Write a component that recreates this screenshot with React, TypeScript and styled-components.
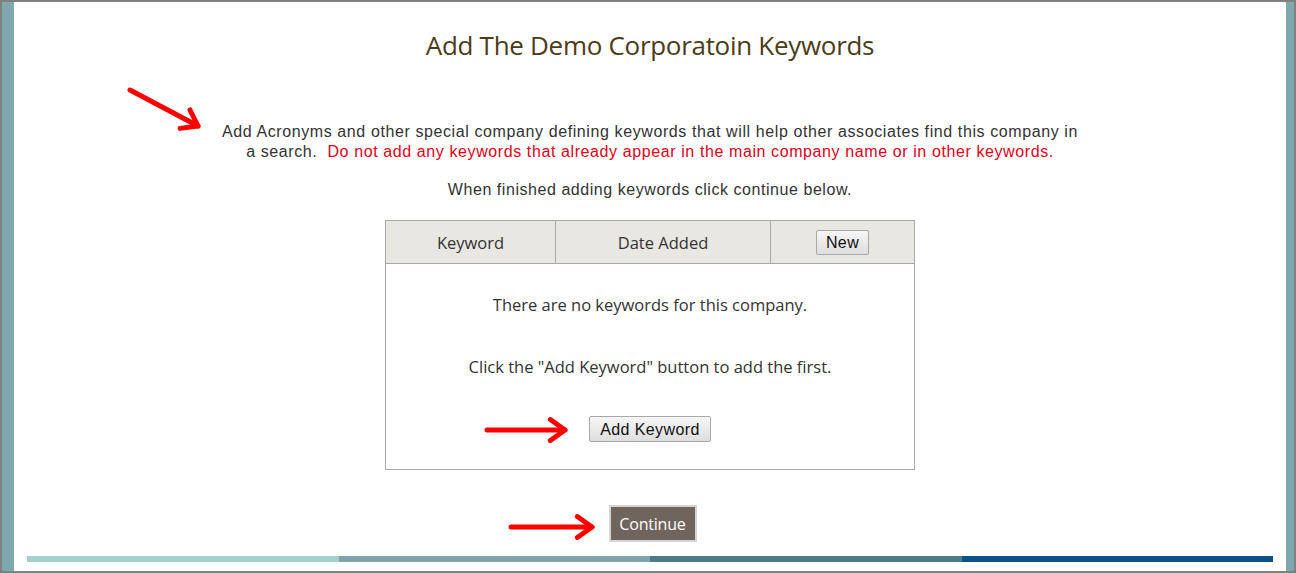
import React from "react";
import styled, { createGlobalStyle } from "styled-components";

const GlobalStyle = createGlobalStyle`
  html, body {
    margin: 0;
    padding: 0;
    background: #ffffff;
  }
  * {
    box-sizing: border-box;
  }
`;

const Frame = styled.div`
  position: relative;
  width: 1296px;
  height: 573px;
  border: 2px solid #808080;
  display: flex;
  background: #ffffff;
`;

const Band = styled.div<{ $w: number }>`
  width: ${(p) => p.$w}px;
  flex-shrink: 0;
  background: #7fa8ad;
`;

const Main = styled.div`
  flex: 1;
  display: flex;
  flex-direction: column;
  align-items: center;
`;

const Title = styled.h1`
  margin: 26px 0 0;
  font-family: "Open Sans", "Noto Sans", sans-serif;
  font-weight: 500;
  font-size: 26px;
  line-height: 34px;
  color: #4c3b18;
  letter-spacing: -0.3px;
`;

const Intro = styled.p`
  margin: 60px 0 0;
  width: 862px;
  text-align: center;
  font-family: "Liberation Sans", Arial, sans-serif;
  font-size: 16px;
  letter-spacing: 0.6px;
  line-height: 20px;
  color: #333333;
`;

const Warning = styled.span`
  color: #e2001a;
`;

const Hint = styled(Intro)`
  margin-top: 18px;
  letter-spacing: 0.55px;
`;

const Table = styled.div`
  margin-top: 20px;
  width: 530px;
  border: 1px solid #a9a9a9;
  font-family: "Open Sans", "Noto Sans", sans-serif;
  font-size: 16.5px;
  color: #333333;
`;

const HeaderRow = styled.div`
  display: grid;
  grid-template-columns: 170px 215px 1fr;
  height: 43px;
  background: #e9e7e2;
  border-bottom: 1px solid #a9a9a9;
`;

const HeaderCell = styled.div<{ $last?: boolean }>`
  display: flex;
  align-items: center;
  justify-content: center;
  border-right: ${(p) => (p.$last ? "none" : "1px solid #a9a9a9")};
`;

const Body = styled.div`
  height: 205px;
  display: flex;
  flex-direction: column;
  align-items: center;
  padding-top: 30px;
`;

const BodyLine = styled.div<{ $gap: number }>`
  margin-top: ${(p) => p.$gap}px;
  line-height: 22px;
`;

const GrayButton = styled.button<{ $size: number; $pad: number }>`
  font-family: "Liberation Sans", Arial, sans-serif;
  font-size: ${(p) => p.$size}px;
  letter-spacing: 0.4px;
  color: #111111;
  background: linear-gradient(#f6f6f6, #dedede);
  border: 1px solid #a8a8a8;
  border-radius: 2px;
  padding: 2px ${(p) => p.$pad}px;
  line-height: 19px;
  cursor: pointer;
`;

const AddButton = styled(GrayButton)`
  margin-top: 38px;
  height: 26px;
`;

const ContinueButton = styled.button`
  margin: 35px 0 0 5px;
  width: 88px;
  height: 37px;
  background: #6f655d;
  color: #ffffff;
  border: 2px solid #d4d4d4;
  font-family: "Open Sans", "Noto Sans", sans-serif;
  font-size: 16px;
  letter-spacing: -0.2px;
  cursor: pointer;
`;

const ColorBar = styled.div`
  margin-top: auto;
  margin-bottom: 9px;
  width: 1246px;
  height: 6px;
  display: grid;
  grid-template-columns: repeat(4, 1fr);
`;

const BarPart = styled.div<{ $c: string }>`
  background: ${(p) => p.$c};
`;

const Arrow = styled.svg`
  position: absolute;
  overflow: visible;
`;

const RedArrow: React.FC<{ x1: number; y1: number; x2: number; y2: number }> = ({
  x1,
  y1,
  x2,
  y2,
}) => {
  const a = Math.atan2(y2 - y1, x2 - x1);
  const len = 18;
  const spread = 0.62;
  const h1x = x2 - len * Math.cos(a - spread);
  const h1y = y2 - len * Math.sin(a - spread);
  const h2x = x2 - len * Math.cos(a + spread);
  const h2y = y2 - len * Math.sin(a + spread);
  return (
    <Arrow width="1" height="1" style={{ left: 0, top: 0 }}>
      <g stroke="#ff0000" strokeWidth="5" strokeLinecap="round" strokeLinejoin="round" fill="none">
        <line x1={x1} y1={y1} x2={x2} y2={y2} />
        <polyline points={`${h1x},${h1y} ${x2},${y2} ${h2x},${h2y}`} />
      </g>
    </Arrow>
  );
};

export default function App() {
  return (
    <>
      <GlobalStyle />
      <Frame>
        <Band $w={12} />
        <Main>
          <Title>Add The Demo Corporatoin Keywords</Title>
          <Intro>
            Add Acronyms and other special company defining keywords that will help other
            associates find this company in a search.{"\u00a0\u00a0"}
            <Warning>
              Do not add any keywords that already appear in the main company name or in other
              keywords.
            </Warning>
          </Intro>
          <Hint>When finished adding keywords click continue below.</Hint>
          <Table>
            <HeaderRow>
              <HeaderCell>Keyword</HeaderCell>
              <HeaderCell>Date Added</HeaderCell>
              <HeaderCell $last>
                <GrayButton $size={16} $pad={9}>New</GrayButton>
              </HeaderCell>
            </HeaderRow>
            <Body>
              <BodyLine $gap={0}>There are no keywords for this company.</BodyLine>
              <BodyLine $gap={40}>Click the "Add Keyword" button to add the first.</BodyLine>
              <AddButton $size={16} $pad={10}>Add Keyword</AddButton>
            </Body>
          </Table>
          <ContinueButton>Continue</ContinueButton>
          <ColorBar>
            <BarPart $c="#a2d0cb" />
            <BarPart $c="#7fa5ab" />
            <BarPart $c="#4d7b8b" />
            <BarPart $c="#0d5185" />
          </ColorBar>
        </Main>
        <Band $w={8} />
        <RedArrow x1={128} y1={88} x2={196} y2={124} />
        <RedArrow x1={485} y1={428} x2={563} y2={428} />
        <RedArrow x1={509} y1={525} x2={590} y2={525} />
      </Frame>
    </>
  );
}
